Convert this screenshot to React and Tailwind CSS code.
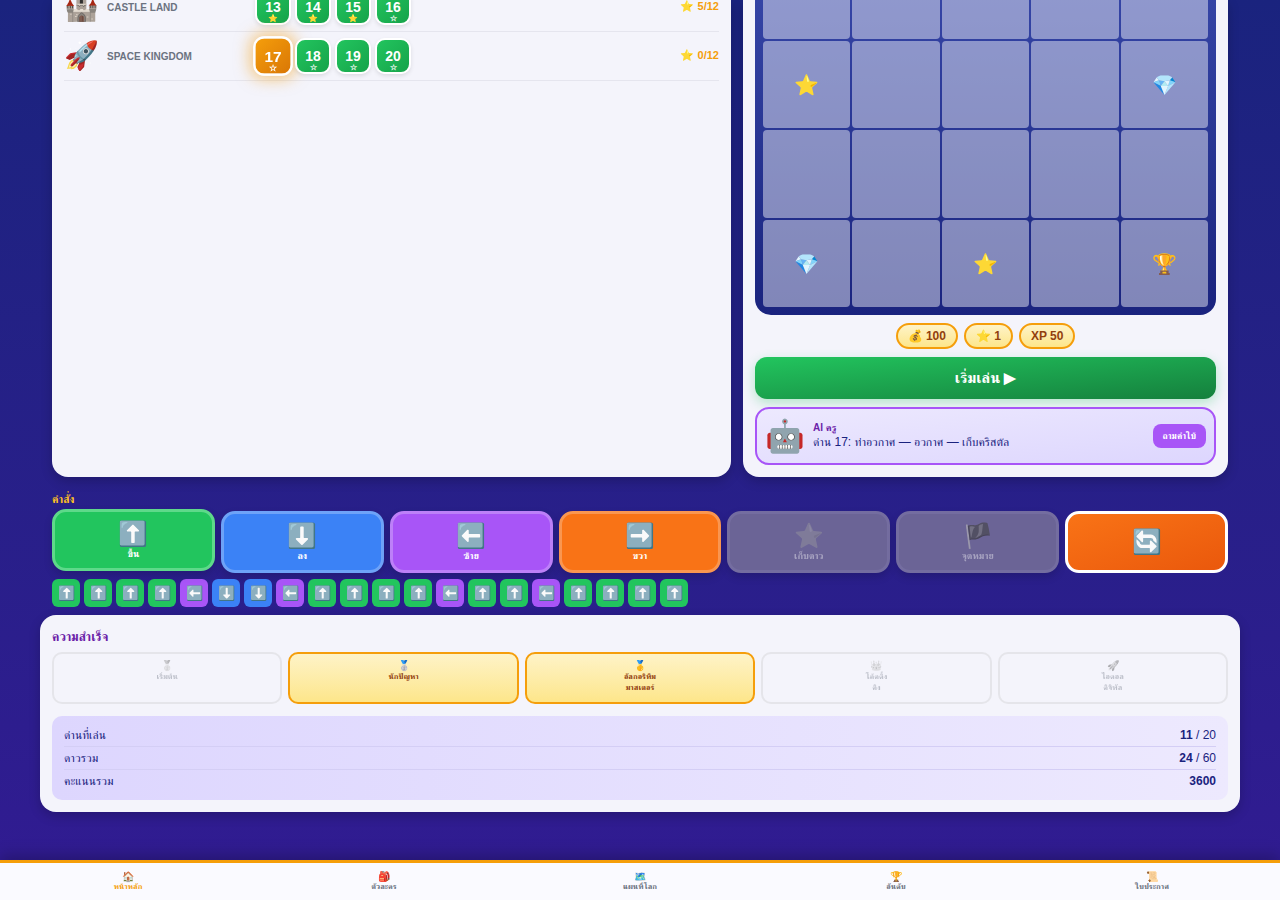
import React from 'react';

function Star() {
  return <span className="font-['Noto_Color_Emoji']">⭐</span>;
}
function Level({ n, stars, current }) {
  return (
    <div className={`relative flex h-9 w-9 items-center justify-center rounded-[10px] border-2 border-white text-white font-bold ${current ? 'scale-110 bg-gradient-to-br from-[#f59e0b] to-[#d97706] shadow-[0_0_14px_3px_rgba(245,158,11,0.5)]' : 'bg-gradient-to-br from-[#22c55e] to-[#16a34a] shadow-[0_2px_4px_rgba(0,0,0,0.1)]'}`}>
      <span className="text-sm leading-[16px]">{n}</span>
      <span className="absolute inset-x-0 bottom-[-1px] text-center font-[sans-serif] text-[8px] leading-[10px]">{stars ? <Star /> : '☆'}</span>
    </div>
  );
}
function WorldRow({ icon, name, items, stat, first }) {
  return (
    <div className={`flex h-[49px] shrink-0 items-center border-b border-[#e5e5ee] ${first ? '-mt-[17px]' : ''}`}>
      <span className="w-[43px] text-[28px] leading-none shrink-0">{icon}</span>
      <span className="w-[148px] text-[10px] font-bold text-[#6b7280] shrink-0">{name}</span>
      <div className="flex gap-1">{items.map(i => <Level key={i.n} {...i} />)}</div>
      <span className="ml-auto text-[11px] font-bold text-[#f59e0b]"><Star /> {stat}</span>
    </div>
  );
}
function Cell({ children }) {
  return <div className="flex aspect-square items-center justify-center rounded-[4px] bg-white/45 pt-[2px] text-xl">{children}</div>;
}
const cmds = [
  [<span key="u">⬆️</span>, 'ขึ้น', 'bg-[#22c55e] border-[#5ed98a] -translate-y-[2px]'],
  [<span key="d">⬇️</span>, 'ลง', 'bg-[#3b82f6] border-[#6ea3f8]'],
  [<span key="l">⬅️</span>, 'ซ้าย', 'bg-[#a855f7] border-[#bd80f8]'],
  [<span key="r">➡️</span>, 'ขวา', 'bg-[#f97316] border-[#fa9650]'],
  [<Star key="s" />, 'เก็บดาว', 'bg-[#6b6496] border-[#746da0] [&>*]:opacity-40 [&>*:first-child]:grayscale [&>*:first-child]:brightness-75'],
  [<span key="f">🏴</span>, 'จุดหมาย', 'bg-[#6b6496] border-[#746da0] [&>*:last-child]:opacity-40 [&>*:first-child]:opacity-60'],
];
const seqStyle = {
  U: ['⬆️', 'bg-[#22c55e]'],
  L: ['⬅️', 'bg-[#a855f7]'],
  D: ['⬇️', 'bg-[#3b82f6]'],
};
const badges = [
  ['🥈', ['เริ่มต้น'], false],
  ['🥈', ['นักปัญหา'], true],
  ['🥇', ['อัลกอริทึม', 'มาสเตอร์'], true],
  ['👑', ['โค้ดดิ้ง', 'คิง'], false],
  ['🚀', ['ไอดอล', 'ดิจิทัล'], false],
];
const nav = [['🏠', 'หน้าหลัก', true], ['🎒', 'ตัวละคร'], ['🗺️', 'แผนที่โลก'], ['🏆', 'อันดับ'], ['📜', 'ใบประกาศ']];

export default function App() {
  return (
    <div className="relative h-[900px] overflow-hidden bg-gradient-to-b from-[#1a237e] to-[#311b92] font-['Liberation_Sans','FreeSerif',sans-serif]">
      <div className="flex h-[477px] gap-3 px-[52px]">
        <div className="flex flex-1 flex-col overflow-hidden rounded-b-2xl bg-[#f4f4fb] px-3 shadow-[0_4px_12px_rgba(0,0,0,0.2)]">
          <WorldRow first icon="🏰" name="CASTLE LAND" stat="5/12" items={[{ n: 13, stars: 1 }, { n: 14, stars: 1 }, { n: 15, stars: 1 }, { n: 16 }]} />
          <WorldRow icon="🚀" name="SPACE KINGDOM" stat="0/12" items={[{ n: 17, current: true }, { n: 18 }, { n: 19 }, { n: 20 }]} />
        </div>
        <div className="flex w-[485px] flex-col justify-end overflow-hidden rounded-b-2xl bg-[#f4f4fb] px-3 pb-3 shadow-[0_4px_12px_rgba(0,0,0,0.2)]">
          <div className="shrink-0 rounded-b-2xl bg-gradient-to-b from-[#3949ab] to-[#1a237e] px-2 pb-2">
            <div className="grid grid-cols-5 gap-[2px]">
              <Cell /><Cell /><Cell /><Cell /><Cell />
              <Cell><Star /></Cell><Cell /><Cell /><Cell /><Cell>💎</Cell>
              <Cell /><Cell /><Cell /><Cell /><Cell />
              <Cell>💎</Cell><Cell /><Cell><Star /></Cell><Cell /><Cell>🏆</Cell>
            </div>
          </div>
          <div className="mt-2 flex shrink-0 justify-center gap-[6px]">
            {[<>💰 100</>, <><Star /> 1</>, <>XP 50</>].map((t, i) => (
              <span key={i} className="rounded-full border-2 border-[#f59e0b] bg-gradient-to-b from-[#fef3c7] to-[#fde68a] px-[10px] py-[3px] text-xs font-bold leading-[16px] text-[#92400e]">{t}</span>
            ))}
          </div>
          <div className="mt-2 flex h-[42px] shrink-0 items-center justify-center rounded-xl bg-gradient-to-br from-[#22c55e] to-[#15803d] text-[15px] font-bold text-white shadow-[0_4px_12px_rgba(34,197,94,0.3)]">เริ่มเล่น <span className="ml-1 font-[sans-serif]">▶</span></div>
          <div className="mt-2 flex h-[58px] shrink-0 items-center gap-2 rounded-[14px] border-2 border-[#a855f7] bg-gradient-to-br from-[#ede9fe] to-[#ddd6fe] px-2">
            <span className="text-[32px] leading-none">🤖</span>
            <div className="flex flex-col">
              <span className="text-[10px] font-bold leading-[12px] text-[#6b21a8]">AI ครู</span>
              <span className="text-xs leading-[16px] text-[#1a237e]">ด่าน 17: ท่าอวกาศ — อวกาศ — เก็บคริสตัล</span>
            </div>
            <span className="ml-auto rounded-lg bg-[#a855f7] px-[10px] py-[6px] text-[9px] font-bold leading-[12px] text-white">ถามคำใบ้</span>
          </div>
        </div>
      </div>

      <div className="mt-3 px-[52px]">
        <div className="text-[11px] font-bold leading-[20px] text-[#fbbf24]">คำสั่ง</div>
        <div className="mt-[2px] grid grid-cols-7 gap-[6px]">
          {cmds.map(([e, l, c]) => (
            <div key={l} className={`flex h-[62px] flex-col items-center justify-center rounded-[14px] border-[3px] text-white shadow-[0_4px_8px_rgba(0,0,0,0.15)] ${c}`}>
              <span className="text-2xl leading-[28px]">{e}</span>
              <span className="text-[9.5px] font-bold leading-[12px]">{l}</span>
            </div>
          ))}
          <div className="flex h-[62px] items-center justify-center rounded-[14px] border-[3px] border-white bg-gradient-to-br from-[#f97316] to-[#ea580c] text-2xl">🔄</div>
        </div>
        <div className="mt-[6px] flex gap-1">
          {'UUUULDDLUUUULUULUUUU'.split('').map((s, i) => (
            <span key={i} className={`flex h-7 w-7 items-center justify-center rounded-md text-sm ${seqStyle[s][1]}`}>{seqStyle[s][0]}</span>
          ))}
        </div>
      </div>

      <div className="mx-10 mt-2 rounded-2xl bg-[#f4f4fb] p-3 shadow-[0_4px_12px_rgba(0,0,0,0.2)]">
        <div className="text-[12.5px] font-bold leading-[20px] text-[#6b21a8]">ความสำเร็จ</div>
        <div className="mt-[5px] grid grid-cols-5 gap-[6px]">
          {badges.map(([e, ls, on], i) => (
            <div key={i} className={`flex h-[52px] flex-col items-center rounded-[10px] border-2 pt-[6px] text-[8px] font-bold leading-[11px] ${on ? 'border-[#f59e0b] bg-gradient-to-b from-[#fef3c7] to-[#fde68a] text-[#92400e]' : 'border-[#e5e5ea] text-[#6b7280] [&>*]:opacity-40 [&>*:first-child]:grayscale'}`}>
              <span className="text-[10px] leading-[11px]">{e}</span>
              {ls.map(l => <span key={l}>{l}</span>)}
            </div>
          ))}
        </div>
        <div className="mt-3 rounded-[10px] bg-gradient-to-r from-[#ddd6fe] to-[#ede9fe] px-3 py-2 text-xs leading-[22px] text-[#1a237e]">
          <div className="flex h-[23px] justify-between border-b border-[#d4cef5]"><span>ด่านที่เล่น</span><span><b>11</b> / 20</span></div>
          <div className="flex h-[23px] justify-between border-b border-[#d4cef5]"><span>ดาวรวม</span><span><b>24</b> / 60</span></div>
          <div className="flex h-[22px] justify-between"><span>คะแนนรวม</span><span><b>3600</b></span></div>
        </div>
      </div>

      <div className="absolute inset-x-0 bottom-0 grid h-10 grid-cols-5 border-t-[3px] border-[#f59e0b] bg-[#fafaff] shadow-[0_-4px_16px_rgba(0,0,0,0.25)]">
        {nav.map(([e, l, on]) => (
          <div key={l} className={`flex flex-col items-center pt-2 text-[8px] font-bold leading-[10px] ${on ? 'text-[#f59e0b]' : 'text-[#6b7280]'}`}>
            <span className="text-[10px] leading-[11px]">{e}</span>
            <span>{l}</span>
          </div>
        ))}
      </div>
    </div>
  );
}
